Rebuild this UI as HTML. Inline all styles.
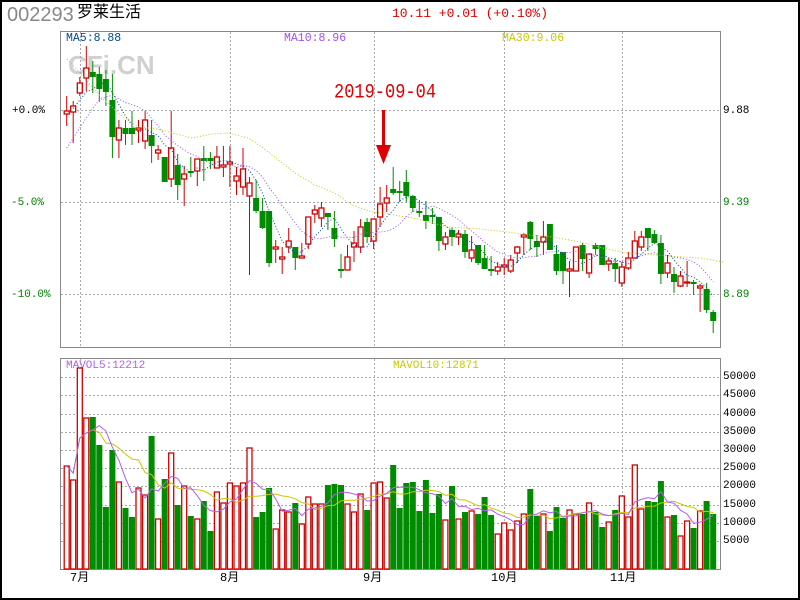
<!DOCTYPE html>
<html><head><meta charset="utf-8"><style>
html,body{margin:0;padding:0;background:#fff;}
#w{position:relative;width:800px;height:600px;overflow:hidden;font-family:"Liberation Mono","Noto Sans CJK SC",monospace;}
#b{position:absolute;left:0;top:0;width:800px;height:600px;box-sizing:border-box;border:2px solid #000;}
.t{position:absolute;white-space:nowrap;line-height:1;}
svg{position:absolute;left:0;top:0;}
</style></head><body><div id="w">
<div id="b"></div>
<div class="t" style="left:7px;top:5px;font-family:'Liberation Sans',sans-serif;font-size:20px;color:#888">002293</div>
<div class="t" style="left:77px;top:5px;font-family:'Liberation Sans','Noto Sans CJK SC',sans-serif;font-size:16px;color:#000">罗莱生活</div>
<div class="t" style="left:392px;top:7px;font-size:13px;color:#e00000">10.11 +0.01 (+0.10%)</div>
<div class="t" style="left:66px;top:33px;font-size:11.5px;color:#004a98">MA5:8.88</div>
<div class="t" style="left:284px;top:33px;font-size:11.5px;color:#a050f0">MA10:8.96</div>
<div class="t" style="left:502px;top:33px;font-size:11.5px;color:#c8c800">MA30:9.06</div>
<div class="t" style="left:68px;top:52px;font-family:'Liberation Sans',sans-serif;font-weight:bold;font-size:26px;color:#d0d0d0">CFi.CN</div>
<div class="t" style="left:334px;top:83px;font-size:17px;color:#e00000;transform:scaleY(1.2);transform-origin:0 0">2019-09-04</div>
<div class="t" style="left:12px;top:106px;font-size:11px;color:#000">+0.0%</div>
<div class="t" style="left:11px;top:198px;font-size:11px;color:#008000">-5.0%</div>
<div class="t" style="left:11px;top:290px;font-size:11px;color:#008000">-10.0%</div>
<div class="t" style="left:723px;top:106px;font-size:11px;color:#000">9.88</div>
<div class="t" style="left:723px;top:198px;font-size:11px;color:#008000">9.39</div>
<div class="t" style="left:723px;top:290px;font-size:11px;color:#008000">8.89</div>
<div class="t" style="left:66px;top:361px;font-size:11px;color:#b060f0">MAVOL5:12212</div>
<div class="t" style="left:393px;top:361px;font-size:11px;color:#c8c800">MAVOL10:12871</div>
<div id="vl"></div>
<div class="t" style="left:70px;top:572px;font-size:12px;color:#000">7月</div>
<div class="t" style="left:220px;top:572px;font-size:12px;color:#000">8月</div>
<div class="t" style="left:363px;top:572px;font-size:12px;color:#000">9月</div>
<div class="t" style="left:491px;top:572px;font-size:12px;color:#000">10月</div>
<div class="t" style="left:610px;top:572px;font-size:12px;color:#000">11月</div>
<svg id="s" width="800" height="600" xmlns="http://www.w3.org/2000/svg"></svg>
</div>
<script>
var C=[["r",111,114,96,126],["r",106,112,101,143],["r",83,93,77,96],["r",68,78,46,91],["g",72,77,61,93],["g",74,89,67,102],["g",79,92,70,106],["g",100,137,74,158],["r",128,140,120,158],["g",128,134,120,145],
["g",128,134,111,145],["r",128,130,120,143],["r",120,141,111,149],["g",135,146,120,163],["r",150,153,145,160],["g",157,182,157,182],["r",148,179,111,187],["g",165,185,154,200],["r",174,179,166,206],["g",171,173,157,177],
["r",159,171,159,186],["g",158,161,146,181],["g",158,161,152,169],["r",157,168,146,168],["r",165,167,146,177],["r",162,164,146,187],["r",176,181,167,195],["r",169,187,148,195],["r",183,196,177,275],["g",198,211,180,213],
["g",211,228,198,229],["g",211,263,211,267],["r",247,249,240,263],["r",257,259,247,274],["r",241,247,228,253],["g",247,258,247,270],["r",256,258,243,258],["r",217,244,217,249],["r",210,214,205,223],["r",208,218,202,227],
["g",213,217,213,230],["g",228,239,211,247],["g",269,270,254,278],["r",257,270,245,270],["r",243,247,231,262],["r",227,247,219,253],["g",222,237,218,243],["r",219,241,219,249],["r",204,217,187,227],["r",198,203,185,212],
["g",189,193,167,195],["g",191,192,181,202],["g",182,196,170,202],["g",196,208,195,212],["g",211,213,201,217],["g",215,221,201,229],["g",215,217,208,224],["g",217,241,217,251],["r",237,244,232,250],["g",230,237,227,246],
["r",234,237,230,245],["g",234,252,230,258],["r",250,258,236,262],["g",245,263,245,265],["g",258,269,245,269],["g",269,271,256,276],["r",267,271,262,275],["r",265,267,258,275],["r",260,271,255,273],["r",247,253,246,263],
["r",235,237,233,255],["g",222,239,221,250],["g",241,247,235,257],["r",237,242,221,255],["g",224,250,224,250],["g",254,271,245,275],["g",252,271,252,284],["r",269,271,261,297],["r",247,271,247,271],["g",245,259,243,271],
["r",254,273,254,278],["g",245,249,243,255],["g",245,265,245,265],["r",261,264,258,271],["g",263,269,258,282],["r",267,283,262,287],["r",258,268,252,270],["r",241,258,231,258],["r",237,247,231,251],["g",228,238,228,251],
["g",234,243,230,243],["g",243,274,235,284],["r",263,273,255,278],["g",274,282,267,293],["r",276,286,271,287],["r",282,283,261,287],["g",282,283,280,295],["r",286,288,284,312],["g",289,310,283,313],["g",312,321,310,333]];
var V=[466,480,368,418,417,445,507,450,482,508,517,488,495,436,519,479,453,505,486,516,519,501,531,492,503,483,486,483,448,517,512,488,529,510,512,503,524,497,504,504,485,484,485,504,512,494,510,483,482,498,465,508,483,482,511,480,513,494,520,486,519,512,511,514,497,515,534,523,530,521,514,489,516,514,531,507,518,510,514,514,503,512,527,522,510,496,517,465,509,501,502,481,517,515,536,521,528,511,501,514];
var h='';
function X(i){return 66.7+i*6.53;}
h+='<rect x="60.5" y="31.5" width="660" height="316" fill="none" stroke="#888"/>';
h+='<rect x="60.5" y="358.5" width="660" height="211" fill="none" stroke="#888"/>';
var vx=[80,230,374,504,622];
vx.forEach(function(x){h+='<line x1="'+(x+.5)+'" y1="32" x2="'+(x+.5)+'" y2="347" stroke="#aaa" stroke-dasharray="2,2"/><line x1="'+(x+.5)+'" y1="359" x2="'+(x+.5)+'" y2="569" stroke="#aaa" stroke-dasharray="2,2"/>';});
[110,202,294].forEach(function(y){h+='<line x1="61" y1="'+(y+.5)+'" x2="720" y2="'+(y+.5)+'" stroke="#aaa" stroke-dasharray="2,2"/>';});
var vlab='';
for(var k=1;k<=10;k++){var y=Math.round(541-(k-1)*18.2);h+='<line x1="61" y1="'+(y+.5)+'" x2="720" y2="'+(y+.5)+'" stroke="#aaa" stroke-dasharray="2,2"/>';
vlab+='<div class="t" style="left:723px;top:'+(y-5)+'px;font-size:11px;color:#000">'+(k*5000)+'</div>';}
document.getElementById('vl').innerHTML=vlab;
for(var i=0;i<100;i++){var x=X(i),c=C[i][0];
 if(c=='r')h+='<rect x="'+(x-2.5).toFixed(1)+'" y="'+V[i]+'" width="5" height="'+(569-V[i])+'" fill="#fff" stroke="#d00000" stroke-width="1.3"/>';
 else h+='<rect x="'+(x-3).toFixed(1)+'" y="'+V[i]+'" width="6" height="'+(569-V[i])+'" fill="#008c00"/>';}
function ma(arr,n){var o=[];for(var i=0;i<arr.length;i++){var s=0,m=0;for(var j=Math.max(0,i-n+1);j<=i;j++){s+=arr[j];m++;}o.push(s/m);}return o;}
function pl(arr,col,dash,st){var p=[];for(var i=st;i<arr.length;i++)p.push(X(i).toFixed(1)+','+arr[i].toFixed(1));return '<polyline points="'+p.join(' ')+'" fill="none" stroke="'+col+'" stroke-width="1"'+(dash?' stroke-dasharray="1,2"':'')+'/>';}
h+=pl(ma(V,10),'#c8c800',0,0);
h+=pl(ma(V,5),'#b060f0',0,0);
for(var i=0;i<100;i++){var d=C[i],x=X(i),col=d[0]=='r'?'#d00000':'#008c00';
 h+='<line x1="'+x.toFixed(1)+'" y1="'+d[3]+'" x2="'+x.toFixed(1)+'" y2="'+d[4]+'" stroke="'+col+'"/>';
 var bh=Math.max(d[2]-d[1],1);
 if(d[0]=='r')h+='<rect x="'+(x-2.5).toFixed(1)+'" y="'+d[1]+'" width="5" height="'+bh+'" fill="#fff" stroke="'+col+'" stroke-width="1.3"/>';
 else h+='<rect x="'+(x-3).toFixed(1)+'" y="'+d[1]+'" width="6" height="'+Math.max(bh,2)+'" fill="'+col+'"/>';}
var cl=C.map(function(d){return d[0]=='r'?d[1]:d[2];});
var m30=[[67,59],[80,73],[99,95],[118,113],[138,127],[158,129],[172,133],[192,138],[212,134],[228,133],[248,138],[262,147],[282,163],[295,173],[315,185],[335,193],[352,205],[372,212],[385,213],[400,216],[413,218],[433,223],[447,227],[480,229],[507,232],[530,235],[553,237],[580,242],[607,249],[627,253],[647,254],[667,256],[700,258],[723,262]];
h+='<polyline points="'+m30.map(function(p){return p.join(',')}).join(' ')+'" fill="none" stroke="#c8c800" stroke-dasharray="1,2"/>';
var m10=ma(cl,10);m10[0]=148;m10[1]=138;m10[2]=128;m10[3]=118;m10[4]=108;m10[5]=100;m10[6]=97;
h+=pl(m10,'#a050f0',1,0);
h+=pl(ma(cl,5),'#004a98',1,1);
h+='<rect x="382" y="110" width="3" height="38" fill="#e00000"/><polygon points="376,145 391,145 383.5,164" fill="#e00000"/>';
document.getElementById('s').innerHTML=h;
</script>
</body></html>
